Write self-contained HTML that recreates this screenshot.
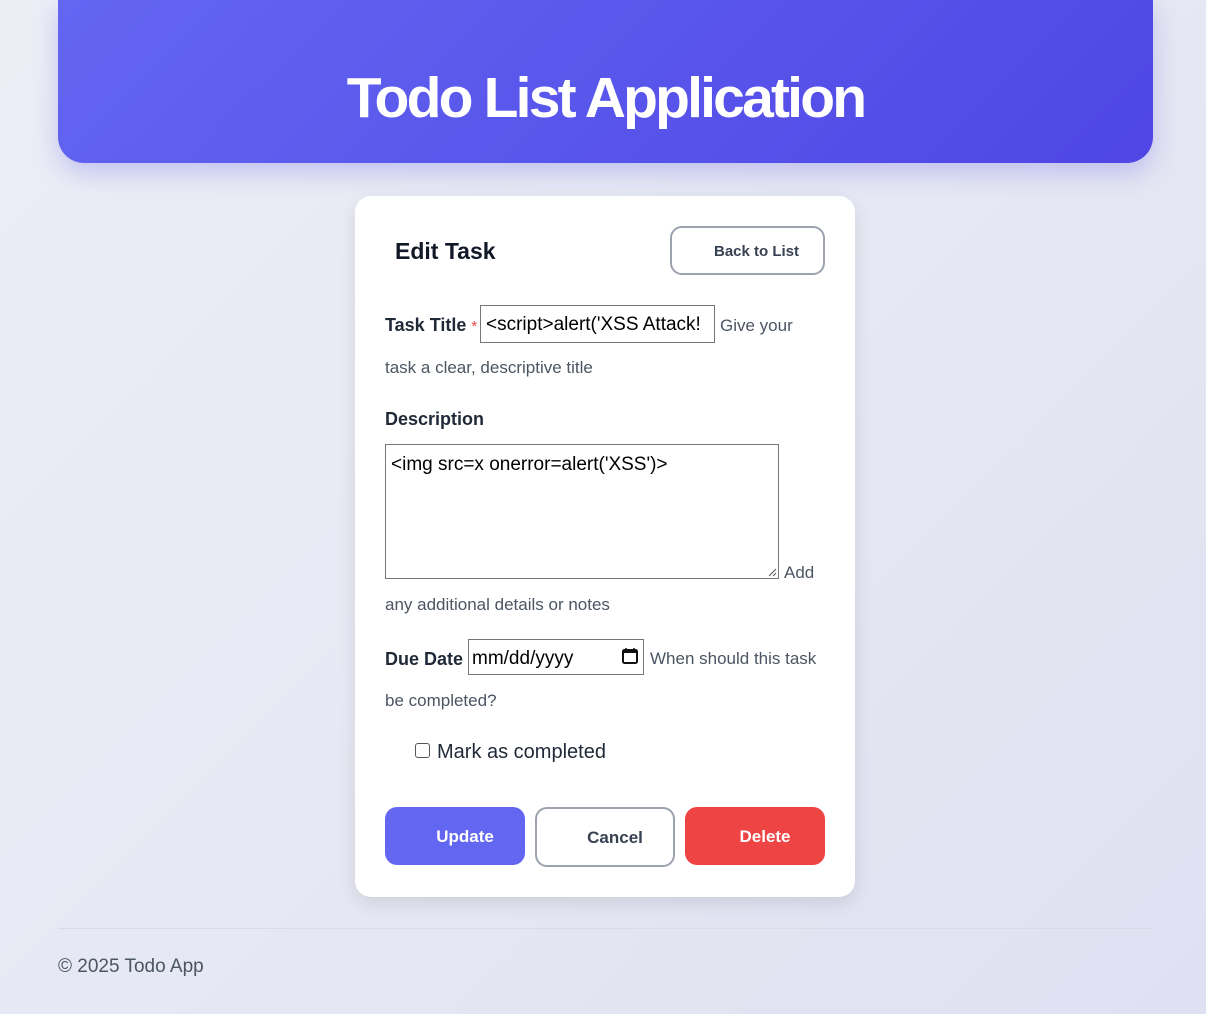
<!DOCTYPE html>
<html><head><meta charset="utf-8"><style>
*{box-sizing:border-box;margin:0;padding:0}
body{width:1206px;height:1014px;overflow:hidden;font-family:"Liberation Sans",sans-serif;background:linear-gradient(135deg,#eceef6 0%,#e6e8f3 50%,#dfe0f2 100%);position:relative;color:#1f2937}
.a{position:absolute;white-space:nowrap}
.hdr{left:58px;top:0;width:1095px;height:163px;border-radius:0 0 26px 26px;background:linear-gradient(135deg,#6366f1,#4f46e5);box-shadow:0 10px 25px rgba(79,70,229,.25)}
.hdr h1{position:absolute;left:0;right:0;top:63px;text-align:center;color:#fff;font-size:57px;font-weight:bold;letter-spacing:-2.8px;line-height:70px}
.card{left:355px;top:196px;width:500px;height:701px;background:#fff;border-radius:16px;box-shadow:0 6px 18px rgba(0,0,0,.1)}
.lbl{font-weight:bold;font-size:18px;color:#1f2937}
.hint{font-size:17px;color:#4b5563}
.inp{border:1px solid #767676;background:#fff;font-size:19px;color:#000;padding-left:5px}
.btn{border-radius:12px;font-weight:bold;font-size:17px;text-align:center}
</style></head><body>
<div class="a hdr"><h1>Todo List Application</h1></div>
<div class="a card"></div>
<div class="a" style="left:395px;top:238px;font-size:23px;font-weight:bold;color:#111827">Edit Task</div>
<div class="a btn" style="left:670px;top:226px;width:155px;height:49px;border:2px solid #9ca3af;line-height:47px;font-size:15px;color:#374151;padding-left:18px">Back to List</div>

<div class="a lbl" style="left:385px;top:315px">Task Title <span style="color:#ef4444;font-weight:normal;font-size:15px">*</span></div>
<div class="a inp" style="left:480px;top:305px;width:235px;height:38px;line-height:38px;overflow:hidden">&lt;script&gt;alert('XSS Attack!</div>
<div class="a hint" style="left:720px;top:316px">Give your</div>
<div class="a hint" style="left:385px;top:358px">task a clear, descriptive title</div>

<div class="a lbl" style="left:385px;top:409px">Description</div>
<div class="a inp" style="left:385px;top:444px;width:394px;height:135px;line-height:40px;padding-top:0">&lt;img src=x onerror=alert('XSS')&gt;</div>
<svg class="a" style="left:767px;top:567px" width="10" height="10"><path d="M9 2L2 9M9 6L6 9" stroke="#555" stroke-width="1"/></svg>
<div class="a hint" style="left:784px;top:563px">Add</div>
<div class="a hint" style="left:385px;top:595px">any additional details or notes</div>

<div class="a lbl" style="left:385px;top:649px">Due Date</div>
<div class="a inp" style="left:468px;top:639px;width:176px;height:36px;line-height:37px;padding-left:3px">mm/dd/yyyy</div>
<svg class="a" style="left:621px;top:647px" width="18" height="18" viewBox="0 0 18 18"><rect x="2" y="3" width="14" height="13" rx="1.5" fill="none" stroke="#111" stroke-width="2"/><rect x="2" y="3" width="14" height="3" fill="#111"/><path d="M5 1v3M13 1v3" stroke="#111" stroke-width="1.5"/></svg>
<div class="a hint" style="left:650px;top:649px">When should this task</div>
<div class="a hint" style="left:385px;top:691px">be completed?</div>

<div class="a" style="left:415px;top:743px;width:15px;height:15px;border:1px solid #555;border-radius:3px;background:#fff"></div>
<div class="a" style="left:437px;top:741px;font-size:20px;color:#1f2937">Mark as completed</div>

<div class="a btn" style="left:385px;top:807px;width:140px;height:58px;background:#6366f1;color:#fff;line-height:60px;padding-left:20px">Update</div>
<div class="a btn" style="left:535px;top:807px;width:140px;height:60px;border:2px solid #9ca3af;color:#374151;line-height:58px;padding-left:20px;background:#fff">Cancel</div>
<div class="a btn" style="left:685px;top:807px;width:140px;height:58px;background:#ef4444;color:#fff;line-height:60px;padding-left:20px">Delete</div>

<div class="a" style="left:58px;top:928px;width:1095px;height:1px;background:#d9dbe6"></div>
<div class="a" style="left:58px;top:956px;font-size:19px;color:#4b5563">© 2025 Todo App</div>
</body></html>
